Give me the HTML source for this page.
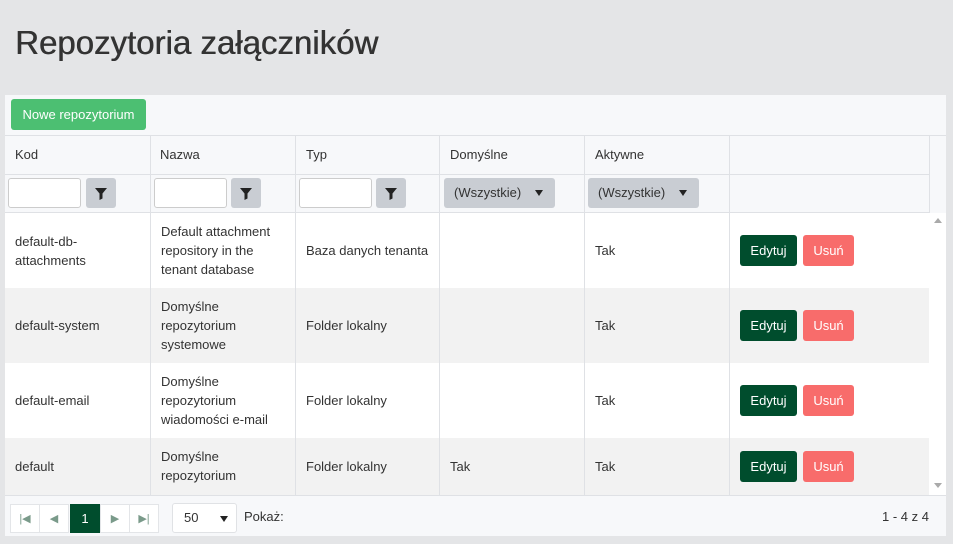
<!DOCTYPE html>
<html><head><meta charset="utf-8"><style>
*{box-sizing:border-box;margin:0;padding:0}
body{width:953px;height:544px;background:#e4e5e7;font-family:"Liberation Sans",sans-serif;color:#333;font-size:13px;position:relative;overflow:hidden}
h1{position:absolute;left:15px;top:24px;font-size:33px;font-weight:normal;color:#333;text-shadow:0.5px 0 0 #333}
.panel{position:absolute;left:5px;top:95px;width:941px;height:441px;background:#f7f8fa}
.abs{position:absolute}
.btn-new{left:6px;top:4px;width:135px;height:31px;background:#4cbf72;color:#fff;border-radius:3px;font-size:13px;line-height:31px;text-align:center}
.hl{position:absolute;height:1px;background:#dfe1e5}
.vl{position:absolute;width:1px;background:#dfe1e5}
.row{position:absolute;left:0;width:924px}
.cell{position:absolute;line-height:19px}
.inp{position:absolute;width:73px;height:30px;background:#fff;border:1px solid #ccc;border-radius:3px}
.fb{position:absolute;width:30px;height:30px;background:#c9cdd3;border-radius:3px}
.sel{position:absolute;width:111px;height:30px;background:#c9cdd3;border-radius:3px;line-height:30px;padding-left:10px;font-size:13px}
.sel:after{content:"";position:absolute;right:12px;top:12px;border:4px solid transparent;border-top:6px solid #222;border-bottom:0}
.ed{position:absolute;width:57px;height:31px;background:#004d2d;color:#fff;border-radius:3px;text-align:center;line-height:31px}
.us{position:absolute;width:51px;height:31px;background:#f86c6b;color:#fff;border-radius:3px;text-align:center;line-height:31px}
.pg{position:absolute;top:8px;width:30px;height:29px;border:1px solid #e3e5e8;background:#fff;text-align:center;line-height:28px;color:#7a9a8a;font-size:11px}
</style></head><body>
<h1>Repozytoria załączników</h1>
<div class="panel">
<div class="abs btn-new">Nowe repozytorium</div>
<div class="hl" style="left:0;top:40px;width:941px"></div>
<div class="hl" style="left:0;top:79px;width:924px"></div>
<div class="hl" style="left:0;top:117px;width:924px"></div>
<div class="row" style="top:118px;height:75px;background:#fff"></div>
<div class="row" style="top:193px;height:75px;background:#f2f2f2"></div>
<div class="row" style="top:268px;height:75px;background:#fff"></div>
<div class="row" style="top:343px;height:57px;background:#f2f2f2"></div>
<div class="abs" style="left:924px;top:118px;width:17px;height:282px;background:#fff"></div>
<div class="abs" style="left:929px;top:123px;border:4px solid transparent;border-bottom:5px solid #aaa;border-top:0"></div>
<div class="abs" style="left:929px;top:388px;border:4px solid transparent;border-top:5px solid #aaa;border-bottom:0"></div>
<div class="hl" style="left:0;top:400px;width:941px"></div>
<div class="vl" style="left:145px;top:40px;height:360px"></div>
<div class="vl" style="left:290px;top:40px;height:360px"></div>
<div class="vl" style="left:434px;top:40px;height:360px"></div>
<div class="vl" style="left:579px;top:40px;height:360px"></div>
<div class="vl" style="left:724px;top:40px;height:360px"></div>
<div class="vl" style="left:924px;top:40px;height:78px"></div>
<div class="cell" style="left:10px;top:50px">Kod</div>
<div class="cell" style="left:155px;top:50px">Nazwa</div>
<div class="cell" style="left:301px;top:50px">Typ</div>
<div class="cell" style="left:445px;top:50px">Domyślne</div>
<div class="cell" style="left:590px;top:50px">Aktywne</div>
<div class="inp" style="left:3px;top:83px"></div><div class="fb" style="left:81px;top:83px"><svg width="30" height="30"><path d="M9 10h12l-4.5 5.5v5l-3 1.5v-6.5z" fill="#222"/></svg></div>
<div class="inp" style="left:149px;top:83px"></div><div class="fb" style="left:226px;top:83px"><svg width="30" height="30"><path d="M9 10h12l-4.5 5.5v5l-3 1.5v-6.5z" fill="#222"/></svg></div>
<div class="inp" style="left:294px;top:83px"></div><div class="fb" style="left:371px;top:83px"><svg width="30" height="30"><path d="M9 10h12l-4.5 5.5v5l-3 1.5v-6.5z" fill="#222"/></svg></div>
<div class="sel" style="left:439px;top:83px">(Wszystkie)</div>
<div class="sel" style="left:583px;top:83px">(Wszystkie)</div>
<div class="cell" style="left:10px;top:137px">default-db-<br>attachments</div>
<div class="cell" style="left:156px;top:127px">Default attachment<br>repository in the<br>tenant database</div>
<div class="cell" style="left:301px;top:146px">Baza danych tenanta</div>
<div class="cell" style="left:590px;top:146px">Tak</div>
<div class="ed" style="left:735px;top:140px">Edytuj</div><div class="us" style="left:798px;top:140px">Usuń</div>
<div class="cell" style="left:10px;top:221px">default-system</div>
<div class="cell" style="left:156px;top:202px">Domyślne<br>repozytorium<br>systemowe</div>
<div class="cell" style="left:301px;top:221px">Folder lokalny</div>
<div class="cell" style="left:590px;top:221px">Tak</div>
<div class="ed" style="left:735px;top:215px">Edytuj</div><div class="us" style="left:798px;top:215px">Usuń</div>
<div class="cell" style="left:10px;top:296px">default-email</div>
<div class="cell" style="left:156px;top:277px">Domyślne<br>repozytorium<br>wiadomości e-mail</div>
<div class="cell" style="left:301px;top:296px">Folder lokalny</div>
<div class="cell" style="left:590px;top:296px">Tak</div>
<div class="ed" style="left:735px;top:290px">Edytuj</div><div class="us" style="left:798px;top:290px">Usuń</div>
<div class="cell" style="left:10px;top:362px">default</div>
<div class="cell" style="left:156px;top:352px">Domyślne<br>repozytorium</div>
<div class="cell" style="left:301px;top:362px">Folder lokalny</div>
<div class="cell" style="left:445px;top:362px">Tak</div>
<div class="cell" style="left:590px;top:362px">Tak</div>
<div class="ed" style="left:735px;top:356px">Edytuj</div><div class="us" style="left:798px;top:356px">Usuń</div>
<div style="position:absolute;left:0;top:401px;width:941px;height:40px">
<div class="pg" style="left:5px">|◀</div>
<div class="pg" style="left:34px">◀</div>
<div class="pg" style="left:65px;background:#004d2d;border-color:#004d2d;color:#fff;font-size:13px">1</div>
<div class="pg" style="left:95px">▶</div>
<div class="pg" style="left:124px">▶|</div>
<div class="abs" style="left:167px;top:7px;width:65px;height:30px;background:#fff;border:1px solid #e0e2e5;border-radius:3px;line-height:28px;padding-left:11px">50<span style="position:absolute;right:8px;top:12px;border:4px solid transparent;border-top:6px solid #222;border-bottom:0"></span></div>
<div class="abs" style="left:239px;top:13px">Pokaż:</div>
<div class="abs" style="left:877px;top:13px">1 - 4 z 4</div>
</div>
</div>
</body></html>
